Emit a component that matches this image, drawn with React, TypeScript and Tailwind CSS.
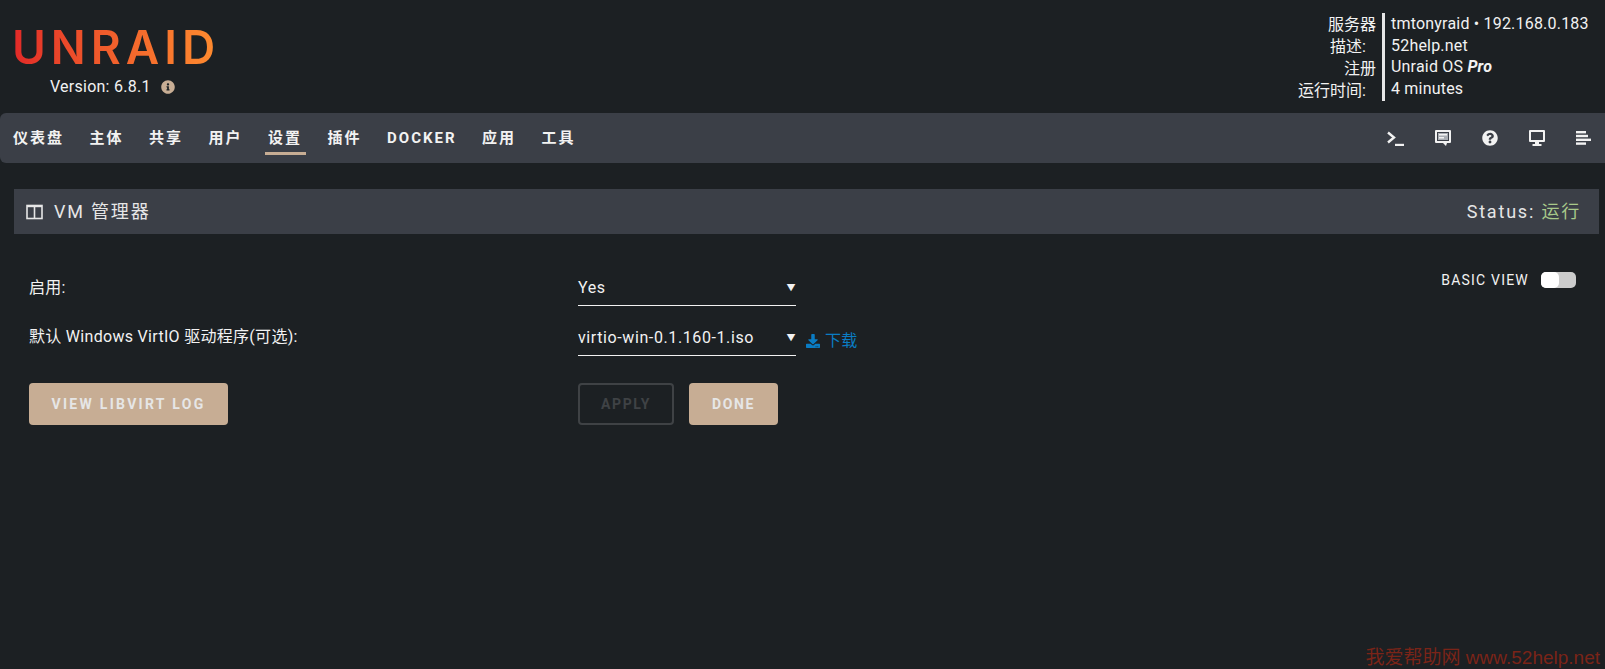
import React from 'react';
import { FaInfoCircle, FaQuestionCircle, FaDownload } from 'react-icons/fa';

const sans = { fontFamily: 'Roboto, "Noto Sans CJK SC", sans-serif' };

const navItems = ['仪表盘', '主体', '共享', '用户', '设置', '插件', 'DOCKER', '应用', '工具'];

function TerminalIcon() {
  return (
    <svg width="17" height="15" viewBox="0 0 17 15" fill="none" stroke="#f2f2f2" strokeWidth="2.4">
      <path d="M1 1.5l6 5-6 5" />
      <path d="M8 14h9" />
    </svg>
  );
}

function CommentIcon() {
  return (
    <svg width="16" height="16" viewBox="0 0 16 16" fill="#f2f2f2">
      <path d="M0 1a1 1 0 011-1h14a1 1 0 011 1v11a1 1 0 01-1 1h-3l-1 3-3-3H1a1 1 0 01-1-1zm2 1v9h12V2z" fillRule="evenodd" />
      <rect x="3" y="3" width="10" height="7" fill="#a9adb3" />
      <rect x="4" y="4" width="8" height="1.5" fill="#f2f2f2" />
      <rect x="4" y="7" width="5" height="1.5" fill="#f2f2f2" />
    </svg>
  );
}

function DesktopIcon() {
  return (
    <svg width="16" height="16" viewBox="0 0 16 16" fill="#f2f2f2">
      <path d="M0 1a1 1 0 011-1h14a1 1 0 011 1v10a1 1 0 01-1 1H1a1 1 0 01-1-1zm2 1v8h12V2z" fillRule="evenodd" />
      <rect x="6" y="12" width="4" height="2" />
      <rect x="3.5" y="14" width="9" height="2" />
    </svg>
  );
}

function LogIcon() {
  return (
    <svg width="15" height="14" viewBox="0 0 15 14" fill="#f2f2f2">
      <rect x="0" y="0" width="10" height="2.4" />
      <rect x="0" y="3.8" width="12" height="2.4" />
      <rect x="0" y="7.6" width="15" height="2.4" />
      <rect x="0" y="11.4" width="10" height="2.4" />
    </svg>
  );
}

function ColumnsIcon() {
  return (
    <svg width="17" height="16" viewBox="0 0 17 16" fill="none" stroke="#e6e6e6" strokeWidth="1.6">
      <rect x="1" y="1.5" width="15" height="13" />
      <path d="M8.5 1.5v13" />
      <path d="M1 2.2h15" strokeWidth="2" />
    </svg>
  );
}

function SelectBox({ value }: { value: string }) {
  return (
    <div className="relative flex h-[38px] w-[218px] items-center border-b border-[#f2f2f2] text-[16px] tracking-[0.6px] text-[#f2f2f2]">
      <span className="mt-[2px]">{value}</span>
      <span className="absolute right-0 top-[14px] text-[9px]">▼</span>
    </div>
  );
}

export default function App() {
  return (
    <div className="relative h-[669px] overflow-hidden bg-[#1c2023] text-[#f2f2f2]" style={sans}>
      {/* Header */}
      <div className="flex h-[113px] justify-between pl-[14px]">
        <div>
          <div
            className="ml-[-2px] mt-[22px] h-[50px] w-[230px] whitespace-nowrap text-[46px] font-semibold leading-[50px] tracking-[5px]"
            style={{ fontFamily: 'Inter, sans-serif' }}
          >
            <span className="bg-linear-to-r from-[#e22828] to-[#ff8c2f] bg-clip-text text-transparent">UNRAID</span>
          </div>
          <div className="mt-[4px] flex items-center pl-[36px] text-[16px] leading-[22px] tracking-[0.25px]">
            <span>Version: 6.8.1</span>
            <FaInfoCircle className="ml-[10px] text-[14px] text-[#c7ad94]" />
          </div>
        </div>
        <div className="mt-[13px] flex text-[16px]">
          <div className="w-[111px] pr-[6px] pt-[1px] text-right leading-[22px]">
            <div>服务器</div>
            <div className="pr-[10px]">描述:</div>
            <div>注册</div>
            <div className="pr-[10px]">运行时间:</div>
          </div>
          <div className="h-[88px] w-[223px] border-l-[3px] border-[#e6e6e6] pl-[6px] leading-[21.5px] tracking-[0.2px]">
            <div>tmtonyraid • 192.168.0.183</div>
            <div>52help.net</div>
            <div>
              Unraid OS <span className="font-bold italic">Pro</span>
            </div>
            <div>4 minutes</div>
          </div>
        </div>
      </div>

      {/* Nav */}
      <div className="flex h-[50px] items-center justify-between rounded-l-[6px] bg-[#3b3f47] pl-[13px] pr-[14px]">
        <div className="flex gap-[25.5px] text-[15px] font-bold tracking-[2px]">
          {navItems.map(item => (
            <div key={item} className="relative leading-[50px]">
              {item}
              {item === '设置' && (
                <div className="absolute bottom-[8px] left-[-3px] right-[-4px] h-[3px] bg-[#c7ad94]" />
              )}
            </div>
          ))}
        </div>
        <div className="flex items-center gap-[31px]">
          <TerminalIcon />
          <CommentIcon />
          <FaQuestionCircle className="text-[16px] text-[#f2f2f2]" />
          <DesktopIcon />
          <LogIcon />
        </div>
      </div>

      {/* Section title */}
      <div className="ml-[14px] mr-[6px] mt-[26px] flex h-[45px] items-center justify-between bg-[#3b3f47] pl-[12px] pr-[18px] text-[18px] tracking-[1.8px] text-[#e6e6e6]">
        <div className="flex items-center gap-[11px]">
          <ColumnsIcon />
          <span>VM 管理器</span>
        </div>
        <div>
          Status: <span className="text-[#a8c98a]">运行</span>
        </div>
      </div>

      {/* Settings */}
      <div className="relative pl-[29px] pt-[34px] text-[16px] tracking-[0.3px]">
        <div className="absolute right-[76px] top-[36px] text-[14px] tracking-[1.2px]">BASIC VIEW</div>
        <div className="absolute right-[29px] top-[38px] h-[16px] w-[35px] rounded-[5px] bg-[#cccccc]">
          <div className="h-[16px] w-[18px] rounded-[5px] bg-white" />
        </div>

        <div className="flex h-[42px] items-start">
          <div className="w-[549px] pt-[8px]">启用:</div>
          <SelectBox value="Yes" />
        </div>
        <div className="mt-[8px] flex h-[42px] items-start">
          <div className="w-[549px] pt-[7px]">默认 Windows VirtIO 驱动程序(可选):</div>
          <SelectBox value="virtio-win-0.1.160-1.iso" />
          <a className="ml-[10px] mt-[11px] flex items-center gap-[5px] text-[#0a7cc4]">
            <FaDownload className="text-[14px]" />
            <span>下载</span>
          </a>
        </div>

        <div className="mt-[23px] flex items-center text-[14px] font-bold tracking-[1.6px]">
          <div className="flex h-[42px] w-[199px] items-center justify-center rounded-[4px] bg-[#c7ad94] tracking-[2.3px] text-[#e6e6e6]">
            VIEW LIBVIRT LOG
          </div>
          <div className="ml-[350px] flex h-[42px] w-[96px] items-center justify-center rounded-[4px] border-2 border-[#3f4245] text-[#3f4245]">
            APPLY
          </div>
          <div className="ml-[15px] flex h-[42px] w-[89px] items-center justify-center rounded-[4px] bg-[#c7ad94] text-[#e6e6e6]">
            DONE
          </div>
        </div>
      </div>

      {/* Watermark */}
      <div
        className="absolute bottom-[-3px] right-[5px] text-[19px] text-[#7a2418]"
        style={{ fontFamily: '"Liberation Sans", "Noto Sans CJK SC", sans-serif' }}
      >
        我爱帮助网 www.52help.net
      </div>
    </div>
  );
}
